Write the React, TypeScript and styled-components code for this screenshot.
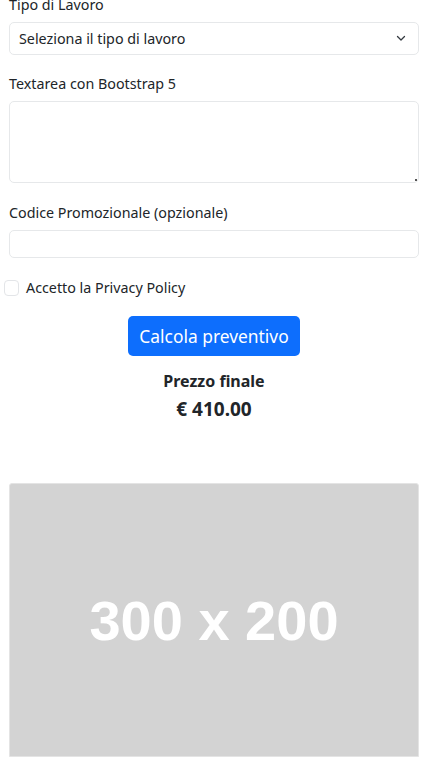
import React from "react";
import styled, { createGlobalStyle } from "styled-components";

const Global = createGlobalStyle`
  html, body { margin: 0; padding: 0; background: #fff; overflow: hidden; }
  body { font-family: "Noto Sans", "Open Sans", sans-serif; color: #212529; }
  * { box-sizing: border-box; }
`;

const Page = styled.div`
  padding: 0 4px 0 9px;
  display: flex;
  flex-direction: column;
  margin-top: -6px;
`;

const Field = styled.div<{ $gap?: number }>`
  display: flex;
  flex-direction: column;
  margin-bottom: ${(p) => p.$gap ?? 19}px;
`;

const Label = styled.label`
  font-size: 14.3px;
  line-height: 22px;
  margin-bottom: 6px;
  color: #212529;
`;

const SelectBox = styled.div`
  height: 33px;
  border: 1px solid #e6e8ea;
  border-radius: 5px;
  display: flex;
  align-items: center;
  justify-content: space-between;
  padding: 0 12px 0 9px;
  font-size: 14.3px;
`;

const TextArea = styled.div`
  height: 82px;
  border: 1px solid #e6e8ea;
  border-radius: 5px;
  position: relative;
`;

const Grip = styled.span`
  position: absolute;
  right: 1px;
  bottom: 1px;
  width: 2px;
  height: 2px;
  background: #555;
`;

const Input = styled.div`
  height: 28px;
  border: 1px solid #e6e8ea;
  border-radius: 5px;
`;

const CheckRow = styled.div`
  display: flex;
  align-items: center;
  gap: 7px;
  margin-left: -5px;
  font-size: 14.3px;
  line-height: 22px;
  margin-bottom: 17px;
`;

const Check = styled.span`
  width: 15px;
  height: 16px;
  border: 1px solid #e3e5e8;
  border-radius: 4px;
`;

const Center = styled.div`
  display: flex;
  flex-direction: column;
  align-items: center;
`;

const Button = styled.button`
  height: 40px;
  width: 172px;
  background: #0d6efd;
  color: #fff;
  border: none;
  border-radius: 5px;
  font-family: inherit;
  font-size: 17.4px;
  padding: 0;
  margin-bottom: 14px;
`;

const PriceLabel = styled.div`
  font-weight: 700;
  font-size: 16px;
  line-height: 22px;
  margin-bottom: 4px;
`;

const Price = styled.div`
  font-weight: 700;
  font-size: 19px;
  line-height: 26px;
`;

const Placeholder = styled.div`
  margin-top: 61px;
  height: 274px;
  background: #d3d3d3;
  border: 1px solid #e4e4e4;
  border-radius: 3px 3px 0 0;
  display: flex;
  align-items: center;
  justify-content: center;
  color: #fff;
  font-family: "Liberation Sans", Arial, sans-serif;
  font-weight: 700;
  font-size: 56px;
`;

export default function App() {
  return (
    <>
      <Global />
      <Page>
        <Field $gap={18}>
          <Label>Tipo di Lavoro</Label>
          <SelectBox>
            <span>Seleziona il tipo di lavoro</span>
            <svg width="10" height="7" viewBox="0 0 10 7">
              <path d="M1.5 1.5 L5 5 L8.5 1.5" fill="none" stroke="#343a40" strokeWidth="1.3" strokeLinecap="round" strokeLinejoin="round" />
            </svg>
          </SelectBox>
        </Field>
        <Field>
          <Label>Textarea con Bootstrap 5</Label>
          <TextArea>
            <Grip />
          </TextArea>
        </Field>
        <Field>
          <Label>Codice Promozionale (opzionale)</Label>
          <Input />
        </Field>
        <CheckRow>
          <Check />
          <span>Accetto la Privacy Policy</span>
        </CheckRow>
        <Center>
          <Button>Calcola preventivo</Button>
          <PriceLabel>Prezzo finale</PriceLabel>
          <Price>€ 410.00</Price>
        </Center>
        <Placeholder>300 x 200</Placeholder>
      </Page>
    </>
  );
}
